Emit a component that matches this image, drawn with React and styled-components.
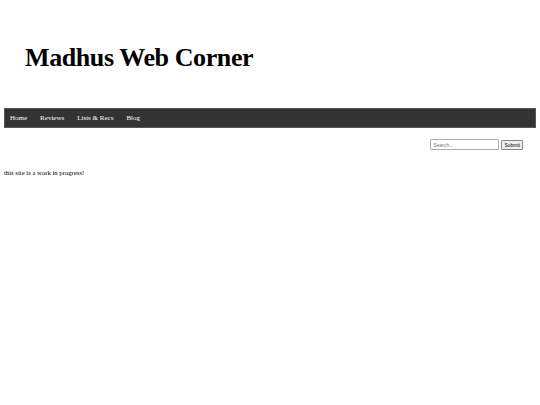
import styled, { createGlobalStyle } from "styled-components";

const GlobalStyle = createGlobalStyle`
  body {
    margin: 4px;
    font-family: "Liberation Serif", "Times New Roman", serif;
    background-color: #fff;
    color: #000;
  }
`;

const Header = styled.header`
  padding: 39px 0 0 21px;
  height: 65px;

  h1 {
    margin: 0;
    font-size: 26px;
    font-weight: bold;
    line-height: 30px;
    letter-spacing: -0.4px;
  }
`;

const NavBar = styled.nav`
  display: flex;
  flex-direction: row;
  align-items: center;

  height: 20px;
  padding: 0 6px;
  gap: 13px;

  background-color: #333;
  box-shadow: inset 0 0 0 1px #555;
`;

const NavLink = styled.a`
  color: #fff;
  font-size: 7px;
  text-decoration: none;
  cursor: pointer;
`;

const SearchRow = styled.form`
  display: flex;
  flex-direction: row;
  justify-content: flex-end;
  align-items: center;

  gap: 2px;
  padding: 11px 13px 0 0;
`;

const SearchInput = styled.input`
  width: 63px;
  height: 7px;
  padding: 1px 2px;

  border: 1px solid #aaa;
  border-radius: 1px;

  font-family: "Liberation Sans", Arial, sans-serif;
  font-size: 5px;
  color: #000;

  ::placeholder {
    color: #888;
  }
`;

const SubmitButton = styled.button`
  height: 10px;
  padding: 0 2px;

  border: 1px solid #888;
  border-radius: 1px;
  background-color: #efefef;

  font-family: "Liberation Sans", Arial, sans-serif;
  font-size: 5px;
  color: #000;
`;

const Content = styled.p`
  margin: 19px 0 0 0;
  font-size: 6.7px;
`;

function App() {
  return (
    <>
      <GlobalStyle />
      <Header>
        <h1>Madhus Web Corner</h1>
      </Header>
      <NavBar>
        <NavLink>Home</NavLink>
        <NavLink>Reviews</NavLink>
        <NavLink>Lists &amp; Recs</NavLink>
        <NavLink>Blog</NavLink>
      </NavBar>
      <SearchRow onSubmit={(e) => e.preventDefault()}>
        <SearchInput type="text" placeholder="Search.." />
        <SubmitButton type="submit">Submit</SubmitButton>
      </SearchRow>
      <Content>this site is a work in progress!</Content>
    </>
  );
}

export default App;
